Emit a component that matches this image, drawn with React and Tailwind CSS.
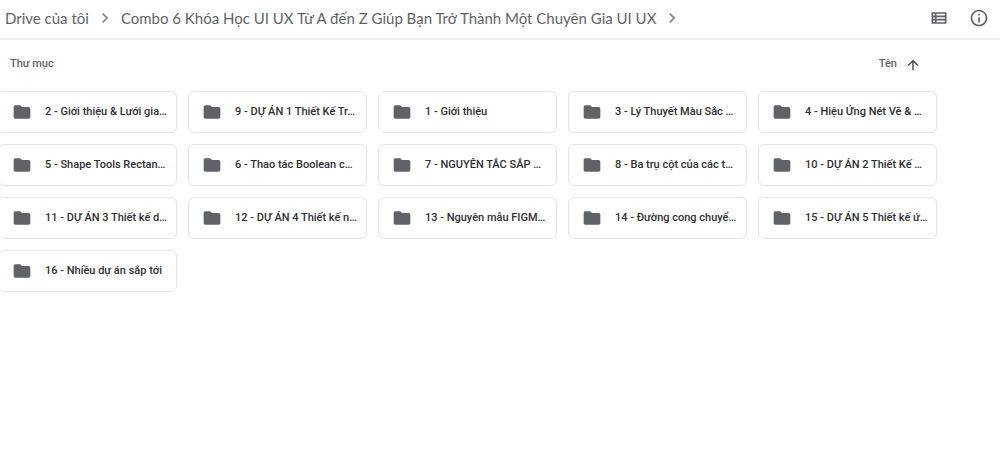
import {
  MdArrowUpward,
  MdChevronRight,
  MdFolder,
  MdOutlineInfo,
  MdOutlineViewList,
} from 'react-icons/md';

const folders = [
  '2 - Giới thiệu & Lưới gia…',
  '9 - DỰ ÁN 1 Thiết Kế Tr…',
  '1 - Giới thiệu',
  '3 - Lý Thuyết Màu Sắc …',
  '4 - Hiệu Ứng Nét Vẽ & …',
  '5 - Shape Tools Rectan…',
  '6 - Thao tác Boolean c…',
  '7 - NGUYÊN TẮC SẮP …',
  '8 - Ba trụ cột của các t…',
  '10 - DỰ ÁN 2 Thiết Kế …',
  '11 - DỰ ÁN 3 Thiết kế d…',
  '12 - DỰ ÁN 4 Thiết kế n…',
  '13 - Nguyên mẫu FIGM…',
  '14 - Đường cong chuyể…',
  '15 - DỰ ÁN 5 Thiết kế ứ…',
  '16 - Nhiều dự án sắp tới',
];

const Header = () => (
  <header className="flex h-10 items-center justify-between border-b-2 border-[#efefef] pb-0.5 pl-[5px] pr-[11px] text-[#5f6368]">
    <nav
      aria-label="Breadcrumb"
      className="flex items-center whitespace-nowrap font-['Lato',sans-serif] text-[15px] leading-5"
    >
      <a href="#drive">Drive của tôi</a>
      <MdChevronRight className="mx-1.5 size-5 text-[#80868b]" />
      <a href="#combo">
        Combo 6 Khóa Học UI UX Từ A đến Z Giúp Bạn Trở Thành Một Chuyên Gia UI UX
      </a>
      <MdChevronRight className="mx-1.5 size-5 text-[#80868b]" />
    </nav>
    <div className="flex items-center gap-5">
      <button type="button" aria-label="Bố cục danh sách">
        <MdOutlineViewList className="size-5" />
      </button>
      <button type="button" aria-label="Xem chi tiết">
        <MdOutlineInfo className="size-5" />
      </button>
    </div>
  </header>
);

const FolderCard = ({ name }) => (
  <button
    type="button"
    className="flex h-[42px] min-w-0 items-center gap-[13px] overflow-hidden rounded-md border border-[#e4e4e4] pl-[13px] text-left"
  >
    <MdFolder className="size-5 shrink-0 text-[#5f6368]" />
    <span className="whitespace-nowrap text-[11px] font-medium text-[#2f3033]">
      {name}
    </span>
  </button>
);

const App = () => {
  return (
    <div className="min-h-screen overflow-x-hidden bg-white font-['Roboto',sans-serif]">
      <Header />
      <main className="pr-[63px]">
        <div className="flex h-[51px] items-center justify-between pb-0.5 pl-[10px] pr-4 text-[11px] font-medium text-[#5f6368]">
          <h2>Thư mục</h2>
          <button type="button" className="flex items-center gap-2">
            Tên
            <MdArrowUpward className="size-4 text-[#3c4043]" />
          </button>
        </div>
        <div className="-ml-[2px] grid grid-cols-5 gap-[11px]">
          {folders.map((name) => (
            <FolderCard key={name} name={name} />
          ))}
        </div>
      </main>
    </div>
  );
};

export default App;
